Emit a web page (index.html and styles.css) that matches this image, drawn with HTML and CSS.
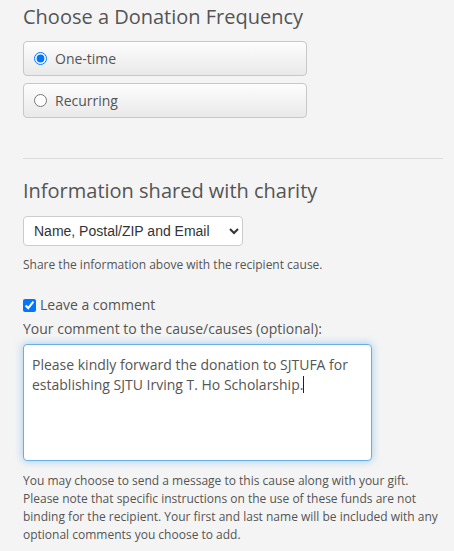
FILE: index.html
```html
<!DOCTYPE html>
<html>
<head>
<meta charset="utf-8">
<link rel="stylesheet" href="styles.css">
</head>
<body>
<div class="page">
  <h2 class="heading">Choose a Donation Frequency</h2>
  <div class="options">
    <label class="option"><input type="radio" name="freq" checked><span>One-time</span></label>
    <label class="option"><input type="radio" name="freq"><span>Recurring</span></label>
  </div>
  <hr class="divider">
  <h2 class="heading heading2">Information shared with charity</h2>
  <select class="share-select">
    <option>Name, Postal/ZIP and Email</option>
  </select>
  <p class="hint">Share the information above with the recipient cause.</p>
  <label class="check"><input type="checkbox" checked><span>Leave a comment</span></label>
  <div class="label">Your comment to the cause/causes (optional):</div>
  <div class="textarea">Please kindly forward the donation to SJTUFA for establishing SJTU Irving T. Ho Scholarship.<span class="caret"></span></div>
  <p class="note">You may choose to send a message to this cause along with your gift. Please note that specific instructions on the use of these funds are not binding for the recipient. Your first and last name will be included with any optional comments you choose to add.</p>
</div>
</body>
</html>
```
FILE: styles.css
```css
html, body {
  margin: 0;
  padding: 0;
  background: #f4f4f4;
}
body {
  font-family: "Open Sans", "Liberation Sans", sans-serif;
  color: #555;
}
.page {
  padding: 3px 11px 0 23px;
}
.heading {
  margin: 0;
  font-size: 20px;
  font-weight: 400;
  line-height: 28px;
  color: #555;
}
.options {
  margin-top: 10px;
  width: 284px;
  display: flex;
  flex-direction: column;
  gap: 7px;
}
.option {
  display: flex;
  align-items: center;
  height: 33px;
  border: 1px solid #c8c8c8;
  border-radius: 4px;
  background: linear-gradient(#fdfdfd, #e9e9e9);
  font-size: 14px;
  color: #555;
  box-sizing: content-box;
}
.option input {
  margin: 0 8px 0 10px;
  width: 13px;
  height: 13px;
}
.divider {
  margin: 40px 0 0;
  border: 0;
  border-top: 1px solid #dcdcdc;
  height: 0;
}
.heading2 {
  margin-top: 18px;
}
.share-select {
  display: block;
  margin-top: 11px;
  width: 220px;
  height: 30px;
  font-family: "Liberation Sans", Arial, sans-serif;
  font-size: 14px;
  color: #333;
  background: #fff;
  border: 1px solid #ccc;
  border-radius: 4px;
  padding: 0 6px;
}
.hint {
  margin: 10px 0 0;
  font-size: 12px;
  line-height: 17px;
}
.check {
  display: flex;
  align-items: center;
  margin-top: 22px;
  font-size: 14px;
  line-height: 20px;
}
.check input {
  margin: 0 4px 0 0;
  width: 13px;
  height: 13px;
}
.label {
  margin-top: 4px;
  font-size: 14px;
  line-height: 20px;
}
.textarea {
  margin-top: 5px;
  width: 349px;
  height: 117px;
  box-sizing: border-box;
  background: #fff;
  border: 1px solid #66afe9;
  border-radius: 4px;
  box-shadow: 0 0 8px rgba(102, 175, 233, 0.6);
  padding: 10px 8px 8px;
  font-size: 14px;
  line-height: 20px;
  color: #555;
}
.caret {
  display: inline-block;
  width: 1px;
  height: 17px;
  background: #222;
  vertical-align: -3px;
}
.note {
  margin: 11px 0 0;
  font-size: 12px;
  line-height: 18px;
}
```
